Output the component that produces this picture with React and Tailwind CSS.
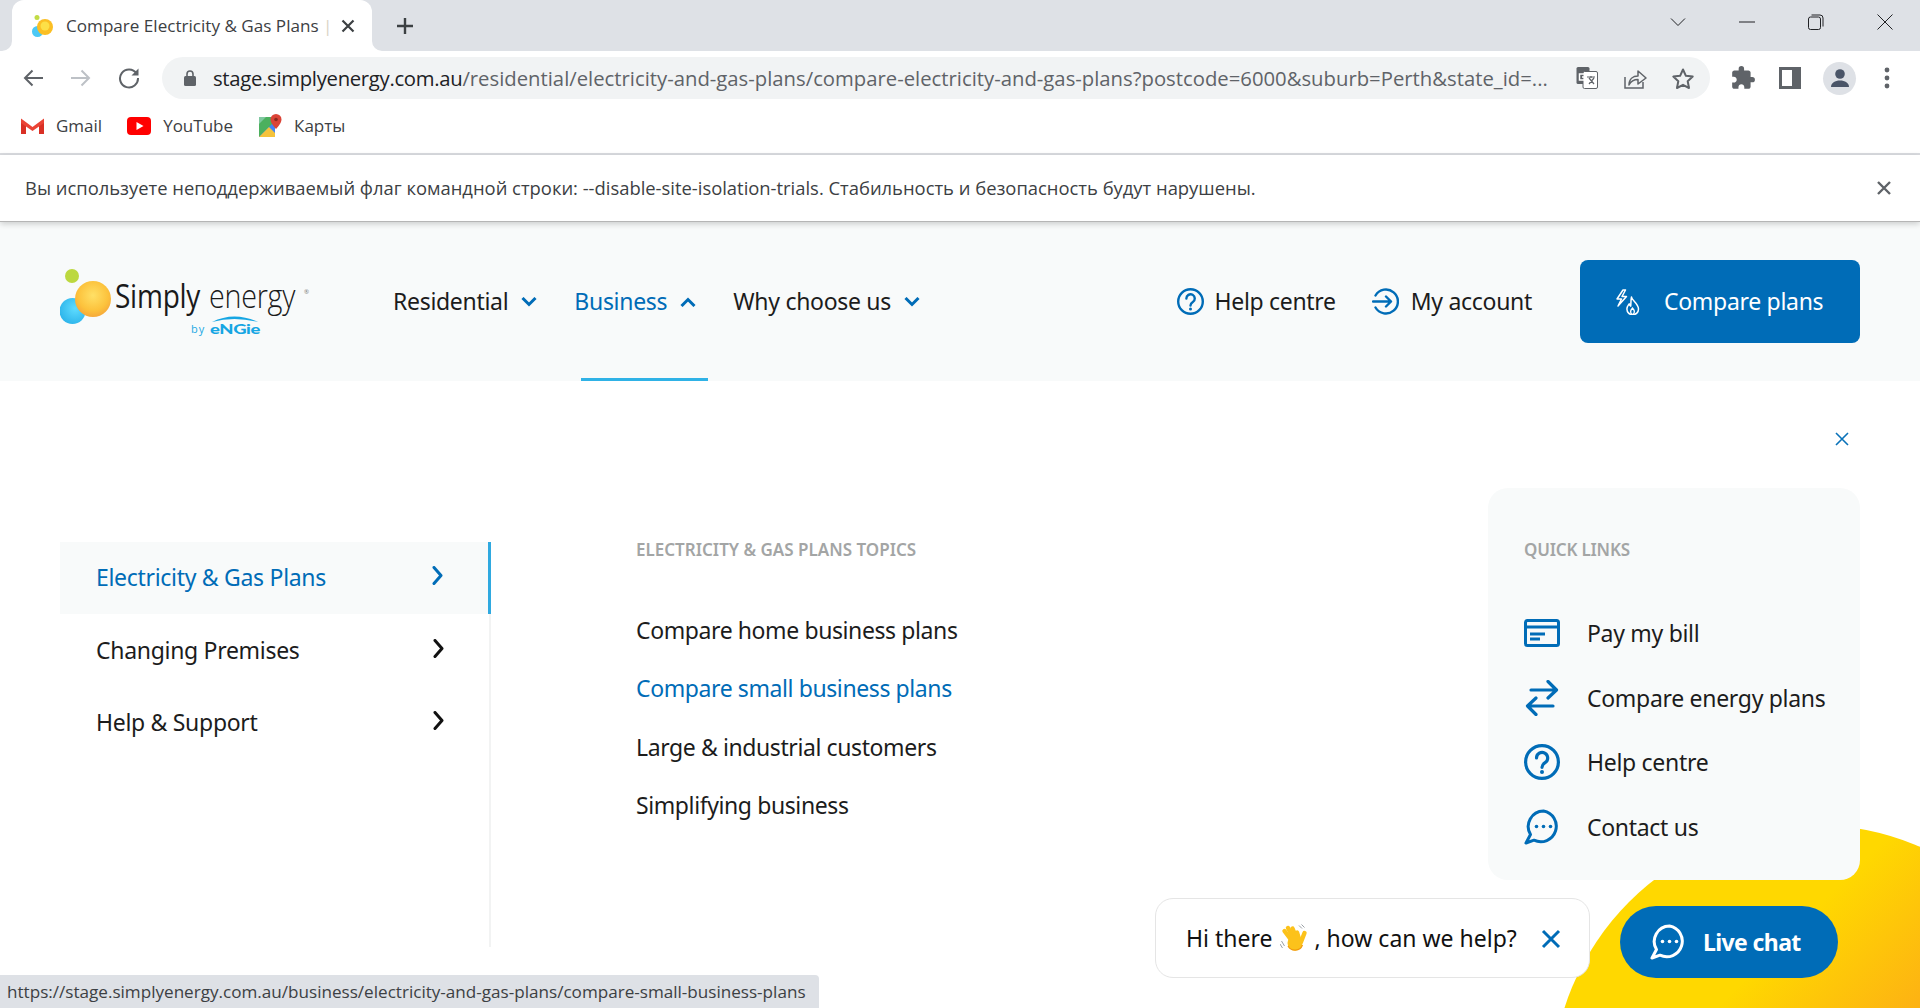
import React from 'react';
import { MdExtension } from 'react-icons/md';

const sans = 'font-["Open_Sans",sans-serif]';
const site = 'font-["Noto_Sans",sans-serif] tracking-[-0.3px]';

const Bubbles = () => (
  <svg width="22" height="22" viewBox="0 0 22 22" className="shrink-0">
    <circle cx="5" cy="2.500" r="2.500" fill="#c2dc45" />
    <circle cx="5.500" cy="16.500" r="5.500" fill="#4cc9f5" />
    <circle cx="13" cy="12" r="8" fill="#fbbf24" />
    <circle cx="13" cy="11" r="4.500" fill="#fde047" />
  </svg>
);

const Logo = () => (
  <svg width="260" height="80" viewBox="60 262 260 80" className="shrink-0">
    <defs>
      <radialGradient id="org" cx="50%" cy="40%" r="60%">
        <stop offset="0%" stopColor="#ffe066" />
        <stop offset="70%" stopColor="#fcc23c" />
        <stop offset="100%" stopColor="#f6a93a" />
      </radialGradient>
      <radialGradient id="blu" cx="60%" cy="40%" r="65%">
        <stop offset="0%" stopColor="#5fdcff" />
        <stop offset="100%" stopColor="#2db4ea" />
      </radialGradient>
    </defs>
    <circle cx="72" cy="276" r="7" fill="#bcd83f" />
    <circle cx="72.500" cy="311" r="13" fill="url(#blu)" />
    <circle cx="93" cy="299" r="18" fill="url(#org)" />
    <text transform="translate(115 308) scale(.85 1)" fontFamily="Open Sans, sans-serif" fontSize="33" fontWeight="500" fill="#1a1a1a">Simply</text>
    <text transform="translate(209 308) scale(.87 1)" fontFamily="Open Sans, sans-serif" fontSize="33" fontWeight="300" fill="#1a1a1a">energy</text>
    <text x="304" y="294" fontFamily="Open Sans, sans-serif" fontSize="6" fill="#777">®</text>
    <text x="191" y="333" fontFamily="Open Sans, sans-serif" fontSize="11" fill="#1fa9e4" textLength="13">by</text>
    <text x="210" y="334" fontFamily="Lato, sans-serif" fontSize="14" fontWeight="900" fill="#16a6e3" textLength="50" lengthAdjust="spacingAndGlyphs">eNGie</text>
    <path d="M212 322 Q234 311 258 322 Q234 316 212 322Z" fill="#16a6e3" />
  </svg>
);

const Chev = ({ up, color = '#006cb7' }) => (
  <svg width="16" height="10" viewBox="0 0 16 10" className="shrink-0">
    <path d={up ? 'M1.500 9 8 2.500 14.500 9' : 'M1.500 1 8 7.500 14.500 1'} fill="none" stroke={color} strokeWidth="3" />
  </svg>
);

const ChevR = ({ color }) => (
  <svg width="11" height="19" viewBox="0 0 11 19" className="shrink-0">
    <path d="M2 1.500 9 9.500 2 17.500" fill="none" stroke={color} strokeWidth="3" strokeLinecap="round" strokeLinejoin="round" />
  </svg>
);

const HelpIcon = ({ size }) => (
  <svg width={size} height={size} viewBox="0 0 36 36" className="shrink-0">
    <circle cx="18" cy="18" r="16.400" fill="none" stroke="#006cb7" strokeWidth="3.200" />
    <path d="M12.500 14a5.600 5.600 0 1 1 8.600 4.700c-2 1.300-3.100 2.300-3.100 4.600" fill="none" stroke="#006cb7" strokeWidth="3.200" strokeLinecap="round" />
    <circle cx="18" cy="28" r="2" fill="#006cb7" />
  </svg>
);

const AccountIcon = () => (
  <svg width="27" height="27" viewBox="0 0 27 27" className="shrink-0">
    <path d="M3.500 7.500a12 12 0 1 1 0 12" fill="none" stroke="#006cb7" strokeWidth="2.400" strokeLinecap="round" />
    <path d="M1 13.500h18M14 8.500l5 5-5 5" fill="none" stroke="#006cb7" strokeWidth="2.400" strokeLinecap="round" strokeLinejoin="round" />
  </svg>
);

const PlansIcon = () => (
  <svg width="25" height="26" viewBox="0 0 25 26" className="shrink-0">
    <path d="M8 1 2 10h4.500L3 17l8.500-9.500H7L10.500 1Z" fill="none" stroke="#fff" strokeWidth="1.500" strokeLinejoin="round" />
    <path d="M16.500 8c.5 3.500 7 6.500 7 12a5.800 5.800 0 0 1-11.600 0c0-2.500 1.300-3.700 2.300-5.200.4 1.400 1 2 1.500 2.300.3-3 .1-6.100.8-9.100Z" fill="none" stroke="#fff" strokeWidth="1.500" strokeLinejoin="round" />
    <path d="M17.500 25.500c-2.200-1-2.700-3.500 0-6.500 2.700 3 2.200 5.500 0 6.500Z" fill="none" stroke="#fff" strokeWidth="1.300" />
  </svg>
);

const BillIcon = () => (
  <svg width="36" height="28" viewBox="0 0 36 28" className="shrink-0">
    <rect x="1.500" y="1.500" width="33" height="25" rx="2" fill="none" stroke="#006cb7" strokeWidth="3" />
    <path d="M1 8h34" stroke="#006cb7" strokeWidth="3" />
    <path d="M6 15h15M6 20h10" stroke="#006cb7" strokeWidth="3" />
  </svg>
);

const SwapIcon = () => (
  <svg width="36" height="36" viewBox="0 0 36 36" className="shrink-0">
    <path d="M7 10h25M24 1.500 32.500 10 24 18" fill="none" stroke="#006cb7" strokeWidth="3.200" strokeLinecap="round" strokeLinejoin="round" />
    <path d="M29 26H4M12 18l-8.500 8 8.500 8.500" fill="none" stroke="#006cb7" strokeWidth="3.200" strokeLinecap="round" strokeLinejoin="round" />
  </svg>
);

const ChatIcon = ({ size, color }) => (
  <svg width={size} height={size} viewBox="0 0 36 36" className="shrink-0">
    <path d="M19.500 2A15.500 15.500 0 0 0 6.500 25.500L2 34l8-2.800A15.500 15.500 0 1 0 19.500 2Z" fill="none" stroke={color} strokeWidth="3" strokeLinejoin="round" />
    <circle cx="12.500" cy="17.500" r="1.800" fill={color} />
    <circle cx="19.500" cy="17.500" r="1.800" fill={color} />
    <circle cx="26.500" cy="17.500" r="1.800" fill={color} />
  </svg>
);

const Wave = () => (
  <svg width="28" height="28" viewBox="0 0 28 28" className="shrink-0">
    <path d="M19 1.500l3 3M21.500.5l3 3M1.500 17l3 5M0 20l2.500 4" stroke="#9aa0a6" strokeWidth="1" fill="none" />
    <g stroke="#fcc21b" strokeLinecap="round" fill="none" strokeWidth="4.400">
      <path d="M4.500 7 12 17" />
      <path d="M8 4 14 15" />
      <path d="M12.500 4.500 17 15" />
      <path d="M17 8.500 19 15" />
      <path d="M24.500 9 21 18" />
    </g>
    <circle cx="15" cy="19" r="7.500" fill="#fcc21b" />
    <path d="M8 22a8 8 0 0 0 14.500-1" fill="none" stroke="#f09a0c" strokeWidth="1.200" />
  </svg>
);

function TitleBar() {
  return (
    <div className="h-[51px] bg-[#dee1e6] flex items-end shrink-0">
      <div className="relative ml-[12px] w-[360px] h-[51px] bg-white rounded-t-[12px] flex items-center pl-[20px]">
        <Bubbles />
        <div className={'ml-[12px] w-[263px] whitespace-nowrap text-[17.100px] text-[#3c4043] ' + sans}>
          Compare Electricity &amp; Gas Plans <span className="text-[#d8d2c4]">|</span>
        </div>
        <svg width="14" height="14" viewBox="0 0 14 14" className="ml-[12px] shrink-0"><path d="M1.500 1.500l11 11M12.500 1.500l-11 11" stroke="#3c4043" strokeWidth="2.200" /></svg>
        <svg width="10" height="10" viewBox="0 0 10 10" className="absolute left-[-10px] bottom-0"><path d="M10 0v10H0a10 10 0 0 0 10-10Z" fill="#fff" /></svg>
        <svg width="10" height="10" viewBox="0 0 10 10" className="absolute right-[-10px] bottom-0"><path d="M0 0v10h10A10 10 0 0 1 0 0Z" fill="#fff" /></svg>
      </div>
      <svg width="18" height="18" viewBox="0 0 18 18" className="ml-[24px] mb-[16px] shrink-0"><path d="M9 1v16M1 9h16" stroke="#3c4043" strokeWidth="2.400" /></svg>
      <div className="ml-auto flex items-start h-[51px]">
        <svg width="16" height="10" viewBox="0 0 16 10" className="mt-[17px]"><path d="M1 1.500l7 7 7-7" fill="none" stroke="#202124" strokeWidth="1" /></svg>
        <svg width="16" height="2" viewBox="0 0 16 2" className="mt-[21px] ml-[53px]"><path d="M0 1h16" stroke="#202124" strokeWidth="1" /></svg>
        <svg width="16" height="16" viewBox="0 0 16 16" className="mt-[14px] ml-[53px]"><rect x=".5" y="3" width="12" height="12.500" rx="2" fill="none" stroke="#202124" /><path d="M3.500 1h8.500a3 3 0 0 1 3 3v8.500" fill="none" stroke="#202124" /></svg>
        <svg width="16" height="16" viewBox="0 0 16 16" className="mt-[14px] ml-[53px] mr-[27px]"><path d="M.5.5l15 15M15.500.5l-15 15" stroke="#202124" strokeWidth="1" /></svg>
      </div>
    </div>
  );
}

function Toolbar() {
  return (
    <div className="h-[54px] bg-white flex items-center shrink-0">
      <svg width="20" height="18" viewBox="0 0 20 18" className="ml-[23px] shrink-0"><path d="M20 9H2M9.500 1.500 2 9l7.500 7.500" fill="none" stroke="#5f6368" strokeWidth="2" /></svg>
      <svg width="20" height="18" viewBox="0 0 20 18" className="ml-[28px] shrink-0"><path d="M0 9h18M10.500 1.500 18 9l-7.500 7.500" fill="none" stroke="#bdc1c6" strokeWidth="2" /></svg>
      <svg width="22" height="22" viewBox="0 0 22 22" className="ml-[27px] shrink-0"><path d="M18.500 6.500A9 9 0 1 0 20 11" fill="none" stroke="#5f6368" strokeWidth="2" /><path d="M20.500 1.500v7h-7Z" fill="#5f6368" /></svg>
      <div className="ml-[22px] w-[1548px] h-[42px] rounded-full bg-[#f1f3f4] flex items-center pl-[22px] shrink-0">
        <svg width="12" height="16" viewBox="0 0 12 16" className="shrink-0"><path d="M3 6V4a3 3 0 0 1 6 0v2" fill="none" stroke="#5f6368" strokeWidth="1.600" /><rect y="6" width="12" height="10" rx="1.500" fill="#5f6368" /></svg>
        <div className={'ml-[17px] w-[1335px] whitespace-nowrap text-[20.300px] text-[#5f6368] ' + sans}>
          <span className="text-[#202124] tracking-[-0.3px]">stage.simplyenergy.com.au</span>/residential/electricity-and-gas-plans/compare-electricity-and-gas-plans?postcode=6000&amp;suburb=Perth&amp;state_id=...
        </div>
        <svg width="22" height="22" viewBox="0 0 22 22" className="ml-[28px] shrink-0">
          <rect x=".5" y="0" width="13" height="17" rx="1.500" fill="#5f6368" />
          <rect x="7" y="4.500" width="14.500" height="17" rx="1.500" fill="#fff" stroke="#5f6368" />
          <path d="M9.500 7H3.500v6h5V10H6" fill="none" stroke="#fff" strokeWidth="1.500" />
          <path d="M11 10h8M15 9v2M13 17l5-6M13 11l5 6" stroke="#5f6368" strokeWidth="1.200" fill="none" />
        </svg>
        <svg width="23" height="21" viewBox="0 0 23 21" className="ml-[26px] shrink-0"><path d="M1 9v11h18v-6" fill="none" stroke="#5f6368" strokeWidth="1.500" /><path d="M5 17c0-6 4-9 9-9V3l8 7-8 6v-4.500c-4 0-7 1.500-9 5.500Z" fill="none" stroke="#5f6368" strokeWidth="1.500" strokeLinejoin="round" /></svg>
        <svg width="22" height="21" viewBox="0 0 22 21" className="ml-[25px] shrink-0"><path d="m11 1.500 2.900 6.300 6.800.8-5 4.700 1.300 6.700L11 16.800 5 20l1.300-6.700-5-4.700 6.800-.8Z" fill="none" stroke="#5f6368" strokeWidth="2" strokeLinejoin="round" /></svg>
      </div>
      <MdExtension className="ml-[20px] shrink-0 text-[#5f6368]" size={26} />
      <svg width="22" height="22" viewBox="0 0 22 22" className="ml-[23px] shrink-0"><rect x="1.500" y="1.500" width="19" height="19" fill="none" stroke="#5f6368" strokeWidth="3" /><rect x="13" y="1" width="8" height="20" fill="#5f6368" /></svg>
      <div className="ml-[22px] w-[33px] h-[33px] rounded-full bg-[#dee1e6] flex items-center justify-center shrink-0">
        <svg width="20" height="18" viewBox="0 0 20 18"><circle cx="10" cy="5" r="4.800" fill="#4a5568" /><path d="M1 18c0-4 4-6.500 9-6.500s9 2.500 9 6.500Z" fill="#4a5568" /></svg>
      </div>
      <svg width="6" height="22" viewBox="0 0 6 22" className="ml-[28px] shrink-0"><circle cx="3" cy="3" r="2.400" fill="#5f6368" /><circle cx="3" cy="11" r="2.400" fill="#5f6368" /><circle cx="3" cy="19" r="2.400" fill="#5f6368" /></svg>
    </div>
  );
}

function Bookmarks() {
  return (
    <div className={'h-[48px] bg-white shrink-0 text-[17px] text-[#3c4043] box-content border-b-2 border-[#dadce0] ' + sans}>
      <div className="h-[41px] flex items-center">
        <svg width="23" height="17" viewBox="0 0 23 17" className="ml-[21px] shrink-0">
          <path d="M0 2v15h5V7Z" fill="#d93025" /><path d="M23 2v15h-5V7Z" fill="#d93025" />
          <path d="M0 1.500 11.500 10 23 1.500V6l-11.500 8L0 6Z" fill="#ea4335" />
        </svg>
        <span className="ml-[12px]">Gmail</span>
        <svg width="24" height="18" viewBox="0 0 24 18" className="ml-[25px] shrink-0"><rect width="24" height="18" rx="4" fill="#f00" /><path d="M9.500 5v8l7-4Z" fill="#fff" /></svg>
        <span className="ml-[12px]">YouTube</span>
        <svg width="23" height="23" viewBox="0 0 23 23" className="ml-[26px] shrink-0">
          <path d="M0 3h16v20H0Z" fill="#4cb05e" /><path d="M0 23 16 7v16Z" fill="#4285f4" /><path d="M0 23 10 13l6 6v4Z" fill="#f5c33b" /><path d="M0 3h7L0 10Z" fill="#7fc8a0" />
          <path d="M17 0a5.500 5.500 0 0 1 5.500 5.500C22.500 9.500 17 15 17 15s-5.500-5.500-5.500-9.500A5.500 5.500 0 0 1 17 0Z" fill="#db4437" />
          <circle cx="17" cy="5.500" r="1.800" fill="#8c2a20" />
        </svg>
        <span className="ml-[12px]">Карты</span>
      </div>
    </div>
  );
}

function Warning() {
  return (
    <div className={'relative z-10 h-[67px] bg-white border-b border-[#b5b5b5] shadow-[0_2px_6px_rgba(0,0,0,0.18)] flex items-center justify-between pl-[25px] pr-[29px] shrink-0 text-[18.400px] text-[#3c4043] ' + sans}>
      <span>Вы используете неподдерживаемый флаг командной строки: --disable-site-isolation-trials. Стабильность и безопасность будут нарушены.</span>
      <svg width="14" height="14" viewBox="0 0 14 14" className="shrink-0"><path d="M1 1l12 12M13 1 1 13" stroke="#5f6368" strokeWidth="2.400" /></svg>
    </div>
  );
}

function NavItem({ label, active, up }) {
  return (
    <div className="flex items-center gap-[13px]">
      <span className={active ? 'text-[#006cb7]' : 'text-[#1c1c1c]'}>{label}</span>
      <Chev up={up} />
    </div>
  );
}

function Header() {
  return (
    <div className={'relative h-[159px] bg-[#f8fafa] flex items-center pl-[60px] pr-[60px] shrink-0 text-[23px] ' + site}>
      <Logo />
      <div className="ml-[73px] flex items-center gap-[37px]">
        <NavItem label="Residential" />
        <NavItem label="Business" active up />
        <NavItem label="Why choose us" />
      </div>
      <div className="ml-auto flex items-center">
        <HelpIcon size={27} />
        <span className="ml-[10px] text-[#1c1c1c]">Help centre</span>
        <div className="ml-[36px]"><AccountIcon /></div>
        <span className="ml-[12px] text-[#1c1c1c]">My account</span>
        <div className="ml-[48px] w-[280px] h-[83px] rounded-[8px] bg-[#006cb7] flex items-center pl-[35px] text-white">
          <PlansIcon />
          <span className="ml-[24px]">Compare plans</span>
        </div>
      </div>
      <div className="absolute left-[581px] bottom-0 w-[127px] h-[3px] bg-[#2fb2e6]" />
    </div>
  );
}

function SideRow({ label, active }) {
  return (
    <div className={'h-[72px] flex items-center justify-between pl-[36px] pr-[45px] ' + (active ? 'bg-[#f8fafa] -mr-[2px] border-r-[3px] border-[#2fa9e0] text-[#006cb7] pr-[44px]' : 'text-[#1c1c1c]')}>
      <span className="-mt-[1px]">{label}</span>
      <span className="-mt-[6px]"><ChevR color={active ? '#006cb7' : '#111'} /></span>
    </div>
  );
}

function QuickRow({ icon, label }) {
  return (
    <div className="h-[64.500px] flex items-center">
      <div className="w-[36px] flex justify-center shrink-0">{icon}</div>
      <span className="ml-[27px]">{label}</span>
    </div>
  );
}

function Main() {
  return (
    <div className={'flex-1 bg-white px-[60px] text-[23px] text-[#1c1c1c] ' + site}>
      <div className="h-[107px] flex justify-end pt-[51px] pr-[11px]">
        <svg width="14" height="14" viewBox="0 0 14 14"><path d="M1 1l12 12M13 1 1 13" stroke="#0a72b9" strokeWidth="1.600" /></svg>
      </div>
      <div className="flex items-start">
        <div className="mt-[54px] w-[431px] h-[405px] border-r-2 border-[#f2f3f3] shrink-0">
          <SideRow label="Electricity & Gas Plans" active />
          <div className="h-[1px]" />
          <SideRow label="Changing Premises" />
          <SideRow label="Help & Support" />
        </div>
        <div className="ml-[145px] mt-[51px]">
          <div className="h-[22px] leading-[22px] text-[17px] tracking-[0px] font-semibold text-[#a3a5a5] uppercase">Electricity &amp; Gas Plans Topics</div>
          <div className="mt-[39.500px] flex flex-col tracking-[-0.4px]">
            <div className="h-[58.500px] flex items-center">Compare home business plans</div>
            <div className="h-[58.500px] flex items-center text-[#006cb7]">Compare small business plans</div>
            <div className="h-[58.500px] flex items-center">Large &amp; industrial customers</div>
            <div className="h-[58.500px] flex items-center">Simplifying business</div>
          </div>
        </div>
        <div className="relative z-10 ml-auto w-[372px] h-[392px] rounded-[20px] bg-[#f8fafa] pl-[36px] pt-[51px]">
          <div className="h-[22px] leading-[22px] text-[17px] tracking-[-0.2px] font-semibold text-[#a3a5a5] uppercase">Quick links</div>
          <div className="mt-[40px]">
            <QuickRow icon={<BillIcon />} label="Pay my bill" />
            <QuickRow icon={<SwapIcon />} label="Compare energy plans" />
            <QuickRow icon={<HelpIcon size={36} />} label="Help centre" />
            <QuickRow icon={<ChatIcon size={36} color="#006cb7" />} label="Contact us" />
          </div>
        </div>
      </div>
    </div>
  );
}

export default function App() {
  return (
    <div className="relative w-[1920px] h-[1008px] overflow-hidden flex flex-col bg-white">
      <TitleBar />
      <Toolbar />
      <Bookmarks />
      <Warning />
      <Header />
      <Main />
      <div className="absolute left-[1552px] top-[825px] w-[526px] h-[526px] rounded-full bg-[linear-gradient(135deg,#ffd800_33%,#fdb213_52%)]" />
      <div className={'absolute left-[1155px] top-[898px] w-[435px] h-[80px] rounded-[18px] bg-white border border-[#e5e5e5] flex items-center pl-[30px] text-[23px] text-[#111] ' + site}>
        <span className="tracking-[0px]">Hi there</span>
        <span className="ml-[8px] mr-[6px]"><Wave /></span>
        <span className="tracking-[0px]">, how can we help?</span>
        <svg width="20" height="20" viewBox="0 0 20 20" className="absolute left-[385px] top-[30px]"><path d="M2 2l16 16M18 2 2 18" stroke="#006cb7" strokeWidth="3" /></svg>
      </div>
      <div className={'absolute left-[1620px] top-[906px] w-[218px] h-[72px] rounded-full bg-[#006cb7] flex items-center pl-[30px] text-white text-[23px] font-bold ' + site}>
        <ChatIcon size={36} color="#fff" />
        <span className="ml-[17px] tracking-[-0.6px]">Live chat</span>
      </div>
      <div className={'absolute left-0 top-[975px] w-[819px] h-[33px] bg-[#dee1e6] rounded-tr-[4px] flex items-center pl-[7px] pt-[1px] text-[17.100px] text-[#3c4043] whitespace-nowrap ' + sans}>
        https://stage.simplyenergy.com.au/business/electricity-and-gas-plans/compare-small-business-plans
      </div>
    </div>
  );
}
